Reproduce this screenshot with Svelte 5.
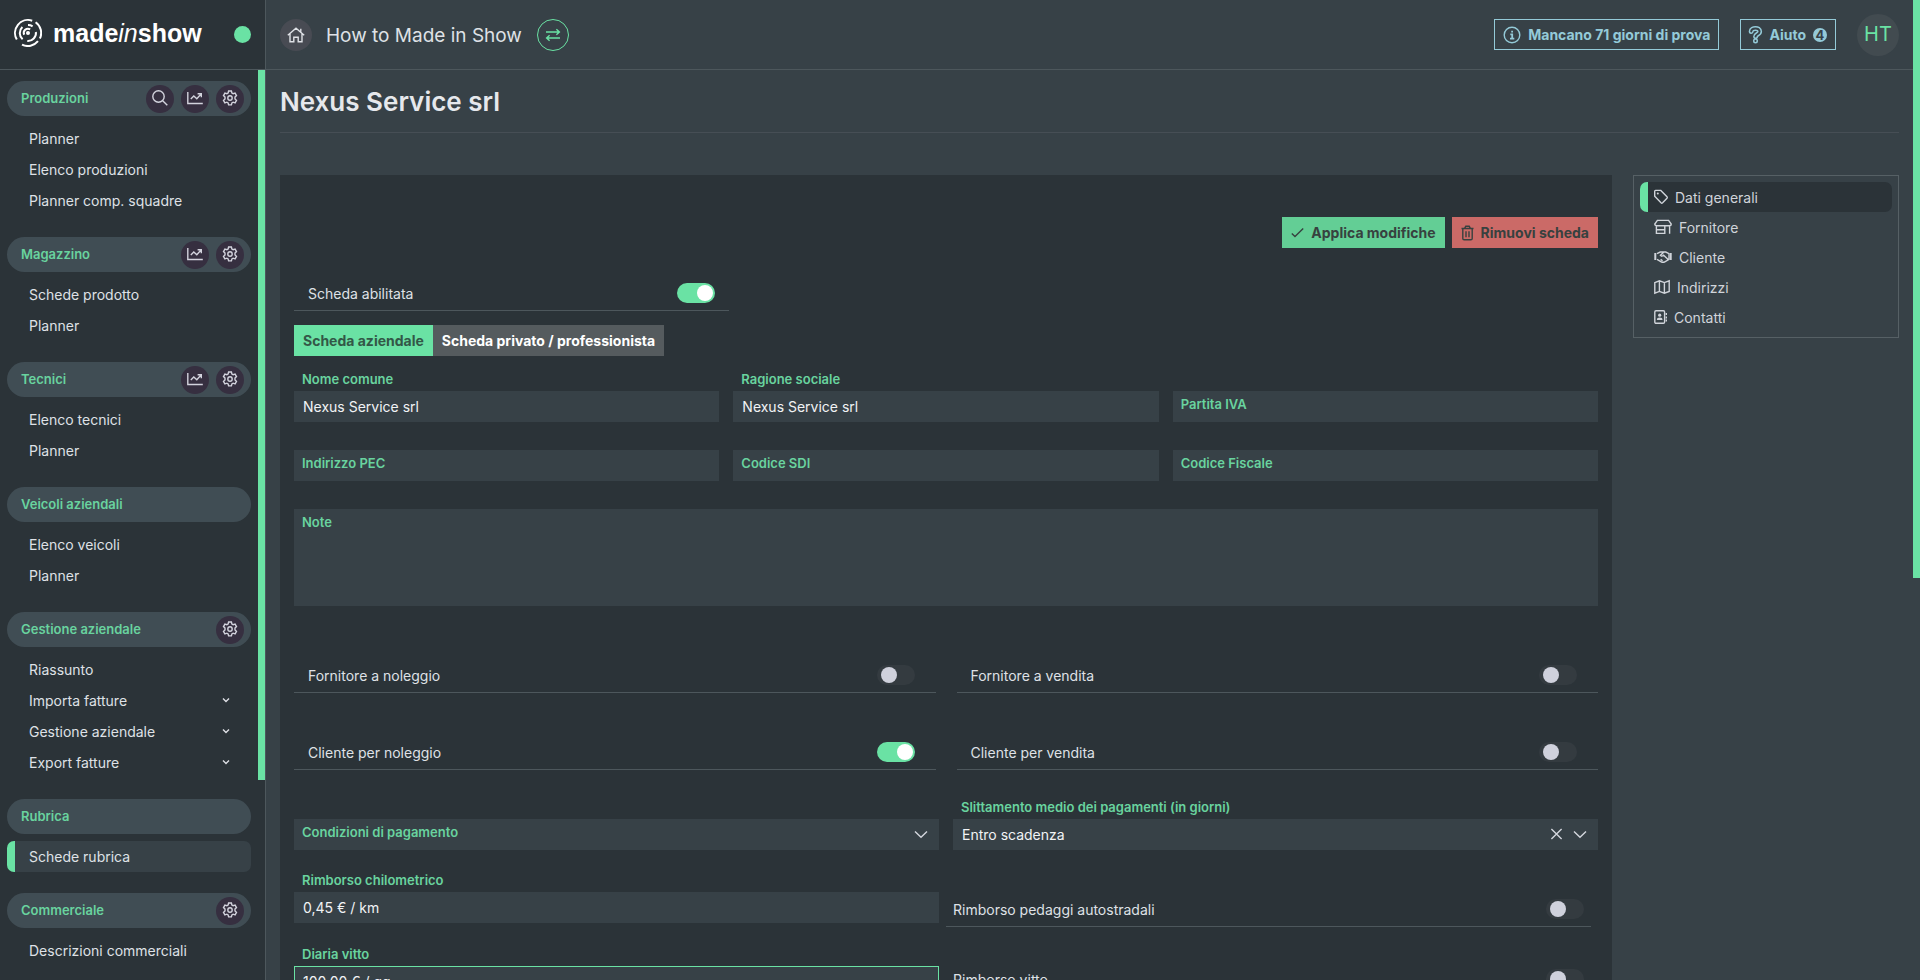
<script>
  let menu = [
    {
      title: "Produzioni",
      tools: ["search", "chart", "gear"],
      links: [{ text: "Planner" }, { text: "Elenco produzioni" }, { text: "Planner comp. squadre" }],
    },
    {
      title: "Magazzino",
      tools: ["chart", "gear"],
      links: [{ text: "Schede prodotto" }, { text: "Planner" }],
    },
    {
      title: "Tecnici",
      tools: ["chart", "gear"],
      links: [{ text: "Elenco tecnici" }, { text: "Planner" }],
    },
    {
      title: "Veicoli aziendali",
      tools: [],
      links: [{ text: "Elenco veicoli" }, { text: "Planner" }],
    },
    {
      title: "Gestione aziendale",
      tools: ["gear"],
      links: [
        { text: "Riassunto" },
        { text: "Importa fatture", sub: true },
        { text: "Gestione aziendale", sub: true },
        { text: "Export fatture", sub: true },
      ],
    },
    {
      title: "Rubrica",
      tools: [],
      links: [{ text: "Schede rubrica", active: true }],
    },
    {
      title: "Commerciale",
      tools: ["gear"],
      links: [{ text: "Descrizioni commerciali" }],
    },
  ];

  let toolNames = { search: "Cerca", chart: "Statistiche", gear: "Impostazioni" };

  let sections = [
    { text: "Dati generali", icon: "tag", width: 14, active: true },
    { text: "Fornitore", icon: "store", width: 18 },
    { text: "Cliente", icon: "handshake", width: 18 },
    { text: "Indirizzi", icon: "map", width: 16 },
    { text: "Contatti", icon: "contact", width: 13 },
  ];

  let fields = $state([
    { id: "nome", label: "Nome comune", value: "Nexus Service srl" },
    { id: "ragione", label: "Ragione sociale", value: "Nexus Service srl" },
    { id: "piva", label: "Partita IVA", value: "" },
    { id: "pec", label: "Indirizzo PEC", value: "" },
    { id: "sdi", label: "Codice SDI", value: "" },
    { id: "cf", label: "Codice Fiscale", value: "" },
  ]);

  let roles = $state([
    { id: "forn-noleggio", label: "Fornitore a noleggio", on: false },
    { id: "forn-vendita", label: "Fornitore a vendita", on: false },
    { id: "cli-noleggio", label: "Cliente per noleggio", on: true },
    { id: "cli-vendita", label: "Cliente per vendita", on: false },
  ]);

  let refunds = $state([
    { id: "pedaggi", label: "Rimborso pedaggi autostradali", on: false },
    { id: "vitto", label: "Rimborso vitto", on: false },
  ]);

  let enabled = $state(true);
  let notes = $state("");
  let kind = $state("azienda");
  let terms = $state("");
  let delay = $state("entro");
  let mileage = $state("0,45 € / km");
  let allowance = $state("100,00 € / gg");
</script>

{#snippet icon(name, width = 16)}
  <svg class="icon" {width} height="16" viewBox="0 0 {width} 16" aria-hidden="true">
    {#if name === "search"}
      <circle cx="6.5" cy="6.5" r="5.7" />
      <path d="M10.7 10.7 15.3 15.3" />
    {:else if name === "chart"}
      <path d="M.8 2v11.5h15M3.8 9l3-3 3 2.7 4-4.4M10.6 3.7h3.7v3.6" />
    {:else if name === "gear"}
      <path d="M6.6 1h2.8l.5 2 1.2.7 2-.6 1.4 2.5-1.5 1.4v1.9l1.5 1.4-1.4 2.5-2-.6-1.2.7-.5 2H6.6l-.5-2-1.2-.7-2 .6-1.4-2.5L3 8.9V7L1.5 5.6l1.4-2.5 2 .6L6.1 3z" />
      <circle cx="8" cy="8" r="2.2" />
    {:else if name === "home"}
      <path d="M.8 8.2 9 1.2l8.2 7M3 6.6v8.2h3.8v-4.6h4.4v4.6H15V6.6M13.8 1.8v3" />
    {:else if name === "swap"}
      <path d="M1 5h13M11.4 2.2 14.4 5l-3 2.7M15 11H2M4.6 8.3 1.6 11l3 2.8" />
    {:else if name === "info"}
      <circle cx="9" cy="8" r="7.8" />
      <path class="thick" d="M7.3 7.4h1.9v4M7 11.6h4.3M8.2 4.6h1.8" />
    {:else if name === "help"}
      <path class="help-out" d="M2.2 4.4C2.4.6 10.6.2 10.6 4.6c0 2.8-4 2.5-4 5M6.5 13.8v.2" />
      <path class="help-in" d="M2.2 4.4C2.4.6 10.6.2 10.6 4.6c0 2.8-4 2.5-4 5M6.5 13.8v.2" />
    {:else if name === "check"}
      <path d="M.8 8.4 4 11.6 12.2 3.4" />
    {:else if name === "trash"}
      <path d="M.5 3.5h12M1.8 3.5v10q0 1.3 1.3 1.3h6.8q1.3 0 1.3-1.3v-10M3.6 3.3 4.8 1.2h3.4l1.2 2.1M5 6.2v6M8 6.2v6" />
    {:else if name === "tag"}
      <path d="M.7 2.2v5l6.3 6.6q.8.7 1.6 0L13 9.3q.7-.8 0-1.6L6.8 1.4H1.5q-.8 0-.8.8z" />
      <circle class="solid" cx="3.8" cy="4.6" r="1" />
    {:else if name === "store"}
      <path d="M3.4 1.4h11.2L17.2 5q0 1.8-1.8 1.8H2.6Q.8 6.8.8 5zM2.4 6.8v7.6h8.4V6.8M2.4 10.8h8.4M15.6 6.8v8" />
    {:else if name === "handshake"}
      <path d="M3 4.6 6.2 3h5.6L15 4.6v5.8L10.4 13q-1.4.6-2.8 0L3 10.4M9.6 3.2 6.4 6.4q1.4 1.6 3.2-.1l4.3 4M8.6 11.8l-2-1.4" />
      <path class="solid" d="M.3 4h2v7h-2zM15.7 4h2v7h-2z" />
    {:else if name === "map"}
      <path d="M.8 3.6 5.4 1.8l5 1.8 4.8-1.8v10.6l-4.8 1.8-5-1.8-4.6 1.8zM5.4 1.8v10.6M10.4 3.6v10.6" />
    {:else if name === "contact"}
      <rect x=".8" y="1.7" width="9.8" height="12.6" rx="1.2" />
      <circle class="solid" cx="5.7" cy="6.2" r="1.6" />
      <path class="solid" d="M2.9 11q0-2.4 2.8-2.4T8.5 11z" />
      <path d="M12.3 4v2M12.3 7.4v2M12.3 10.6v2" />
    {:else if name === "chevron"}
      <path d="M1 4.5 7 10.3 13 4.5" />
    {:else if name === "caret"}
      <path d="M1 5.4 4 8.4 7 5.4" />
    {:else if name === "close"}
      <path d="M1.4 2 11.6 12M11.6 2 1.4 12" />
    {/if}
  </svg>
{/snippet}

<div class="shell">
  <aside class="sidebar">
    <div class="brand">
      <a href="#home" class="name">
        <svg class="logo" viewBox="0 0 28 28" aria-hidden="true">
          <circle cx="14" cy="14" r="2" />
          <path d="M8.6 20.2A8.2 8.2 0 0 1 8.4 8M14 6.1a8 8 0 0 1 4.6 1.3M21.9 13a8 8 0 0 1-8.6 9M10.2 15.8a4.2 4.2 0 0 1 6-5.4" />
          <path d="M2.8 20.6A13 13 0 0 1 18.2 1.7M21.6 3.3a13 13 0 0 1 4.3 16.2M24 22.2A13 13 0 0 1 8 25.6" />
        </svg>
        <span>made<i>in</i>show</span>
      </a>
      <span class="status"></span>
    </div>
    <div class="menu">
      <nav>
        {#each menu as group}
          <section>
            <div class="group">
              <h2>{group.title}</h2>
              {#each group.tools as tool}
                <button type="button" class="tool" aria-label={toolNames[tool]}>{@render icon(tool)}</button>
              {/each}
            </div>
            {#each group.links as link}
              <a href="#menu" class="link" class:active={link.active}>
                {link.text}
                {#if link.sub}{@render icon("caret", 8)}{/if}
              </a>
            {/each}
          </section>
        {/each}
      </nav>
      <div class="rail"><div class="thumb menu-thumb"></div></div>
    </div>
  </aside>

  <div class="page">
    <header>
      <a href="#home" class="home" aria-label="Home">{@render icon("home", 18)}</a>
      <span class="company">How to Made in Show</span>
      <button type="button" class="swap" aria-label="Cambia azienda">{@render icon("swap")}</button>
      <button type="button" class="outline trial">{@render icon("info", 18)}Mancano 71 giorni di prova</button>
      <button type="button" class="outline">{@render icon("help", 13)}Aiuto<span class="count">4</span></button>
      <button type="button" class="avatar">HT</button>
    </header>

    <main>
      <h1>Nexus Service srl</h1>
      <div class="columns">
        <form class="card" onsubmit={(e) => e.preventDefault()}>
          <div class="actions">
            <button type="submit" class="btn save">{@render icon("check", 13)}Applica modifiche</button>
            <button type="button" class="btn remove">{@render icon("trash", 13)}Rimuovi scheda</button>
          </div>

          <div class="thirds">
            <label class="switch">
              Scheda abilitata
              <input type="checkbox" role="switch" bind:checked={enabled} />
            </label>
          </div>

          <div class="tabs">
            <button type="button" class:selected={kind === "azienda"} onclick={() => (kind = "azienda")}>Scheda aziendale</button>
            <button type="button" class:selected={kind === "privato"} onclick={() => (kind = "privato")}>Scheda privato / professionista</button>
          </div>

          <div class="thirds">
            {#each fields as field}
              <div class="field" class:filled={field.value}>
                <label for={field.id}>{field.label}</label>
                <input id={field.id} type="text" bind:value={field.value} />
              </div>
            {/each}
          </div>
          <div class="field" class:filled={notes}>
            <label for="note">Note</label>
            <textarea id="note" bind:value={notes}></textarea>
          </div>

          <div class="roles">
            {#each roles as role}
              <label class="switch wide">
                {role.label}
                <input type="checkbox" role="switch" bind:checked={role.on} />
              </label>
            {/each}
          </div>

          <div class="halves">
            <div class="field" class:filled={terms}>
              <label for="condizioni">Condizioni di pagamento</label>
              <select id="condizioni" bind:value={terms}>
                <option value=""></option>
                <option value="30">30 giorni</option>
              </select>
              <span class="marks">{@render icon("chevron", 14)}</span>
            </div>
            <div class="field" class:filled={delay}>
              <label for="slittamento">Slittamento medio dei pagamenti (in giorni)</label>
              <select id="slittamento" bind:value={delay}>
                <option value=""></option>
                <option value="entro">Entro scadenza</option>
              </select>
              <span class="marks">
                <button type="button" aria-label="Svuota" onclick={() => (delay = "")}>{@render icon("close", 13)}</button>
                {@render icon("chevron", 14)}
              </span>
            </div>
          </div>

          <div class="halves costs">
            <div class="stack">
              <div class="field filled">
                <label for="km">Rimborso chilometrico</label>
                <input id="km" type="text" bind:value={mileage} />
              </div>
              <div class="field filled current">
                <label for="diaria">Diaria vitto</label>
                <input id="diaria" type="text" bind:value={allowance} />
              </div>
            </div>
            <div class="refunds">
              {#each refunds as refund}
                <label class="switch narrow">
                  {refund.label}
                  <input type="checkbox" role="switch" bind:checked={refund.on} />
                </label>
              {/each}
            </div>
          </div>
        </form>

        <nav class="sections">
          {#each sections as section}
            <a href="#sezione" class:active={section.active}>{@render icon(section.icon, section.width)}{section.text}</a>
          {/each}
        </nav>
      </div>
    </main>
  </div>
  <div class="rail"><div class="thumb page-thumb"></div></div>
</div>

<style>
  :global(body) {
    --bg: #374147;
    --dark: #2b3338;
    --line: #4d575c;
    --green: #6ae2a4;
    --label: #69d39f;
    --text: #dfe1e6;
    margin: 0;
    background: var(--bg);
  }

  .shell,
  .shell * {
    box-sizing: border-box;
  }

  .shell {
    display: flex;
    height: 100vh;
    overflow: hidden;
    color: var(--text);
    font: 14px/21px Inter, "Liberation Sans", sans-serif;
  }

  button,
  input,
  select,
  textarea {
    margin: 0;
    border: 0;
    border-radius: 0;
    font: inherit;
    color: inherit;
  }

  button {
    padding: 0;
    background: none;
    cursor: pointer;
  }

  a {
    color: inherit;
    text-decoration: none;
  }

  .icon {
    flex: none;
    fill: none;
    stroke: currentColor;
    stroke-width: 1.4;
    overflow: visible;
  }

  .icon .solid {
    fill: currentColor;
    stroke: none;
  }

  .icon .thick {
    stroke-width: 1.8;
  }

  .icon .help-out {
    stroke-width: 5;
    stroke-linecap: round;
  }

  .icon .help-in {
    stroke: var(--bg);
    stroke-width: 2;
    stroke-linecap: round;
  }

  .rail {
    flex: none;
    width: 7px;
  }

  .thumb {
    background: var(--green);
  }

  .menu-thumb {
    height: 78%;
  }

  .page-thumb {
    height: 59%;
  }

  /* sidebar */
  .sidebar {
    flex: none;
    display: flex;
    flex-direction: column;
    width: 266px;
    border-right: 1px solid var(--line);
    background: var(--dark);
  }

  .brand {
    flex: none;
    display: flex;
    align-items: center;
    justify-content: space-between;
    height: 70px;
    padding: 0 14px;
    border-bottom: 1px solid var(--line);
  }

  .name {
    display: flex;
    gap: 11px;
    padding-bottom: 3px;
    color: #fff;
    font: bold 25px/28px "Liberation Sans", sans-serif;
  }

  .name i {
    font-weight: normal;
  }

  .logo {
    width: 28px;
    height: 28px;
    fill: none;
    stroke: #fff;
    stroke-width: 2;
  }

  .logo circle {
    fill: #fff;
    stroke: none;
  }

  .status {
    width: 17px;
    height: 17px;
    border-radius: 50%;
    background: var(--green);
  }

  .menu {
    flex: 1;
    display: flex;
    min-height: 0;
  }

  .menu nav {
    flex: 1;
    padding: 11px 7px 0;
    overflow: hidden;
  }

  .menu section {
    margin-bottom: 21px;
  }

  .group {
    display: flex;
    align-items: center;
    gap: 7px;
    height: 35px;
    margin-bottom: 7px;
    padding: 0 7px 0 14px;
    border-radius: 18px;
    background: #404d54;
  }

  h2 {
    flex: 1;
    margin: 0;
    color: var(--label);
    font-size: 13px;
    font-weight: 600;
  }

  .tool {
    display: flex;
    align-items: center;
    justify-content: center;
    width: 28px;
    height: 28px;
    padding-bottom: 2px;
    border-radius: 50%;
    background: #362f40;
    color: #d3d3dd;
  }

  .link {
    display: flex;
    align-items: center;
    justify-content: space-between;
    height: 31px;
    padding: 0 21px 0 14px;
    border-left: 8px solid transparent;
    border-radius: 7px;
  }

  .link.active {
    border-left-color: var(--green);
    background: var(--bg);
  }

  /* top bar */
  .page {
    flex: 1;
    min-width: 0;
  }

  header {
    display: flex;
    align-items: center;
    height: 70px;
    padding: 0 14px;
    border-bottom: 1px solid var(--line);
  }

  .home,
  .swap {
    display: flex;
    align-items: center;
    justify-content: center;
    width: 32px;
    height: 32px;
    border-radius: 50%;
  }

  .home {
    background: #484b53;
  }

  .swap {
    border: 1px solid var(--green);
    color: var(--green);
  }

  .company {
    margin: 0 15px 0 14px;
    padding-top: 2px;
    font-size: 19px;
  }

  .outline {
    display: flex;
    align-items: center;
    gap: 7px;
    height: 31px;
    margin-right: 21px;
    padding: 0 8px;
    border: 1px solid #94cad8;
    color: #94cad8;
    font-weight: 700;
  }

  .trial {
    margin-left: auto;
  }

  .count {
    width: 14px;
    height: 14px;
    border-radius: 50%;
    background: #94cad8;
    color: var(--bg);
    font-size: 13px;
    line-height: 14px;
  }

  .avatar {
    width: 42px;
    height: 42px;
    border-radius: 50%;
    background: #424b50;
    color: var(--green);
    font-size: 20px;
  }

  /* card page */
  main {
    padding: 0 14px;
  }

  h1 {
    margin: 0 0 42px;
    padding: 15px 0 13px;
    border-bottom: 1px solid #464e55;
    color: #e6e8ec;
    font-size: 26px;
    font-weight: 600;
    line-height: 34px;
  }

  .columns {
    display: flex;
    align-items: flex-start;
    gap: 21px;
  }

  .card {
    flex: 1;
    min-width: 0;
    padding: 42px 14px;
    background: var(--dark);
  }

  .actions {
    display: flex;
    justify-content: flex-end;
    gap: 7px;
    margin-bottom: 28px;
  }

  .btn {
    display: flex;
    align-items: center;
    gap: 7px;
    height: 31px;
    padding: 0 9px;
    color: #37413f;
    font-weight: 700;
  }

  .save {
    background: #63ce95;
  }

  .remove {
    background: #cb6a67;
  }

  .thirds {
    display: grid;
    grid-template-columns: repeat(3, 1fr);
    column-gap: 14px;
  }

  .switch {
    display: flex;
    align-items: center;
    justify-content: space-between;
    height: 35px;
    padding: 0 14px;
    border-bottom: 1px solid var(--line);
  }

  .thirds .switch {
    margin-right: -10px;
  }

  .switch input {
    appearance: none;
    width: 38px;
    height: 20px;
    padding: 2px 4px;
    border-radius: 10px;
    background: #343b40;
  }

  .switch input::before {
    content: "";
    display: block;
    width: 16px;
    height: 16px;
    border-radius: 50%;
    background: #cfd1dc;
  }

  .switch input:checked {
    padding: 2px;
    background: var(--green);
  }

  .switch input:checked::before {
    margin-left: auto;
    background: #fff;
  }

  .switch.wide {
    padding-right: 21px;
  }

  .switch.narrow {
    padding: 0 7px;
  }

  .tabs {
    display: flex;
    margin: 14px 0 7px;
  }

  .tabs button {
    height: 31px;
    padding: 0 9px;
    background: #555b5e;
    color: #fff;
    font-weight: 700;
  }

  .tabs .selected {
    background: var(--green);
    color: #335747;
  }

  /* an empty field carries its label inside the box, a filled one above it */
  .field {
    display: grid;
    grid-template-rows: 28px auto;
  }

  .field > * {
    grid-area: 2 / 1;
  }

  .field label {
    z-index: 1;
    align-self: start;
    padding: 1px 8px 0;
    color: var(--label);
    font-size: 13px;
    font-weight: 600;
    line-height: 24px;
    pointer-events: none;
  }

  .field.filled label {
    grid-row: 1;
    align-self: end;
    padding-top: 0;
  }

  .field input,
  .field select,
  .field textarea {
    appearance: none;
    width: 100%;
    height: 31px;
    padding: 0 9px;
    outline: 0;
    background: var(--bg);
    color: #f1f3f5;
    resize: none;
  }

  .field textarea {
    height: 97px;
    padding: 24px 9px 7px;
  }

  .field.current input {
    padding: 0 8px;
    border: 1px solid var(--green);
  }

  .marks {
    display: flex;
    align-items: center;
    gap: 10px;
    justify-self: end;
    padding-right: 11px;
    color: #d3d6dd;
    pointer-events: none;
  }

  .marks button {
    display: flex;
    pointer-events: auto;
  }

  .roles {
    display: grid;
    grid-template-columns: 1fr 1fr;
    gap: 42px 21px;
    margin: 52px 0 21px;
  }

  .halves {
    display: grid;
    grid-template-columns: 1fr 1fr;
    column-gap: 14px;
  }

  .costs {
    margin-top: 14px;
  }

  .stack {
    display: grid;
    gap: 14px;
  }

  .refunds {
    display: flex;
    flex-direction: column;
    gap: 35px;
    margin: 28px 7px 0 -7px;
  }

  .sections {
    width: 266px;
    padding: 6px 6px 5px;
    border: 1px solid #566065;
  }

  .sections a {
    display: flex;
    align-items: center;
    gap: 7px;
    height: 30px;
    padding-left: 6px;
    border-left: 8px solid transparent;
    border-radius: 7px;
    color: #d0d4da;
  }

  .sections .active {
    border-left-color: var(--green);
    background: var(--dark);
  }
</style>
